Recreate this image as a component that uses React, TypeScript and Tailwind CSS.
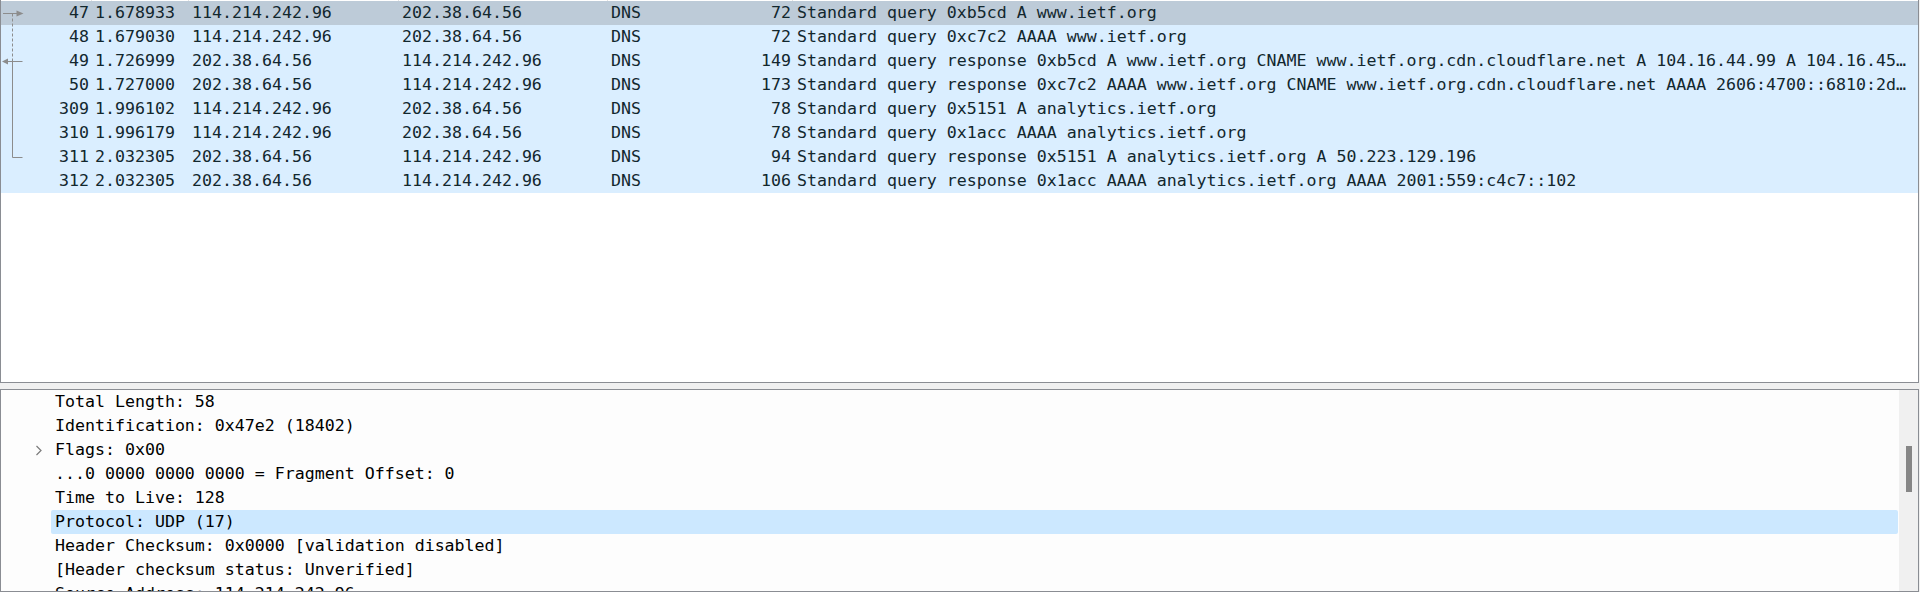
const packets = [
  { no: '47', time: '1.678933', src: '114.214.242.96', dst: '202.38.64.56', proto: 'DNS', len: '72', info: 'Standard query 0xb5cd A www.ietf.org' },
  { no: '48', time: '1.679030', src: '114.214.242.96', dst: '202.38.64.56', proto: 'DNS', len: '72', info: 'Standard query 0xc7c2 AAAA www.ietf.org' },
  { no: '49', time: '1.726999', src: '202.38.64.56', dst: '114.214.242.96', proto: 'DNS', len: '149', info: 'Standard query response 0xb5cd A www.ietf.org CNAME www.ietf.org.cdn.cloudflare.net A 104.16.44.99 A 104.16.45…' },
  { no: '50', time: '1.727000', src: '202.38.64.56', dst: '114.214.242.96', proto: 'DNS', len: '173', info: 'Standard query response 0xc7c2 AAAA www.ietf.org CNAME www.ietf.org.cdn.cloudflare.net AAAA 2606:4700::6810:2d…' },
  { no: '309', time: '1.996102', src: '114.214.242.96', dst: '202.38.64.56', proto: 'DNS', len: '78', info: 'Standard query 0x5151 A analytics.ietf.org' },
  { no: '310', time: '1.996179', src: '114.214.242.96', dst: '202.38.64.56', proto: 'DNS', len: '78', info: 'Standard query 0x1acc AAAA analytics.ietf.org' },
  { no: '311', time: '2.032305', src: '202.38.64.56', dst: '114.214.242.96', proto: 'DNS', len: '94', info: 'Standard query response 0x5151 A analytics.ietf.org A 50.223.129.196' },
  { no: '312', time: '2.032305', src: '202.38.64.56', dst: '114.214.242.96', proto: 'DNS', len: '106', info: 'Standard query response 0x1acc AAAA analytics.ietf.org AAAA 2001:559:c4c7::102' },
];

const details = [
  { text: 'Total Length: 58' },
  { text: 'Identification: 0x47e2 (18402)' },
  { text: 'Flags: 0x00', expandable: true },
  { text: '...0 0000 0000 0000 = Fragment Offset: 0' },
  { text: 'Time to Live: 128' },
  { text: 'Protocol: UDP (17)', selected: true },
  { text: 'Header Checksum: 0x0000 [validation disabled]' },
  { text: '[Header checksum status: Unverified]' },
  { text: 'Source Address: 114.214.242.96' },
];

// related-packet markers drawn in the No. column
function RelatedLines() {
  return (
    <svg className="absolute left-0 top-0 pointer-events-none" width="26" height="192" viewBox="0 0 26 192">
      <g stroke="#8c8c8c" strokeWidth="1" fill="none">
        <path d="M2 12.5 H16" />
        <path d="M11.5 12.5 V60.5" strokeDasharray="3 2" />
        <path d="M11.5 60.5 V156.5" />
        <path d="M6 60.5 H21.5" />
        <path d="M11.5 156.5 H21.5" />
      </g>
      <g fill="#8c8c8c">
        <polygon points="15.5,9.5 22.5,12.5 15.5,15.5" />
        <polygon points="1,60.5 7,57.5 7,63.5" />
      </g>
    </svg>
  );
}

export default function App() {
  return (
    <div className="w-[1920px] h-[592px] bg-[#f0f0f0] flex flex-col overflow-hidden font-['DejaVu_Sans_Mono',monospace] text-[16.6px] leading-[24px]">
      {/* Packet list */}
      <div className="w-[1919px] h-[383px] shrink-0 bg-white border-x border-b border-[#8a8d93] flex flex-col">
        <div className="h-[1px] flex shrink-0">
          <div className="w-[91px] border-r border-[#e3e3e3]" />
          <div className="w-[97px] border-r border-[#e3e3e3]" />
          <div className="w-[210px] border-r border-[#e3e3e3]" />
          <div className="w-[209px] border-r border-[#e3e3e3]" />
          <div className="w-[185px] border-r border-[#e3e3e3]" />
        </div>
        <div className="relative text-[#12272e]">
          {packets.map((p, i) => (
            <div
              key={p.no}
              className={`flex h-[24px] whitespace-nowrap ${i === 0 ? 'bg-[#bdcbd8]' : 'bg-[#daeeff]'}`}
            >
              <div className="w-[91px] shrink-0 text-right pr-[3px]">{p.no}</div>
              <div className="w-[97px] shrink-0 pl-[3px]">{p.time}</div>
              <div className="w-[210px] shrink-0 pl-[3px]">{p.src}</div>
              <div className="w-[209px] shrink-0 pl-[3px]">{p.dst}</div>
              <div className="w-[100px] shrink-0 pl-[3px]">{p.proto}</div>
              <div className="w-[85px] shrink-0 text-right pr-[2px]">{p.len}</div>
              <div className="flex-1 min-w-0 overflow-hidden pl-[4px]">{p.info}</div>
            </div>
          ))}
          <RelatedLines />
        </div>
      </div>

      <div className="h-[6px] shrink-0" />

      {/* Packet details */}
      <div className="w-[1919px] h-[203px] shrink-0 bg-[#fdfdfd] border border-[#8a8d93] flex overflow-hidden">
        <div className="flex-1 min-w-0 text-black">
          {details.map((d) => (
            <div key={d.text} className="flex h-[24px] whitespace-nowrap">
              <div className="w-[50px] shrink-0 flex items-center justify-end pr-[8px]">
                {d.expandable && (
                  <svg width="8" height="11" viewBox="0 0 8 11">
                    <path d="M1.5 1 L6 5.5 L1.5 10" stroke="#7a7a7a" strokeWidth="1.2" fill="none" />
                  </svg>
                )}
              </div>
              <div
                className={`flex-1 mr-[1px] pl-[4px] rounded-[2px] ${d.selected ? 'bg-[#cce8ff]' : ''}`}
              >
                {d.text}
              </div>
            </div>
          ))}
        </div>
        <div className="w-[19px] shrink-0 bg-[#f0f0f0] pt-[56px] pl-[7px]">
          <div className="w-[6px] h-[46px] bg-[#868686]" />
        </div>
      </div>
    </div>
  );
}
